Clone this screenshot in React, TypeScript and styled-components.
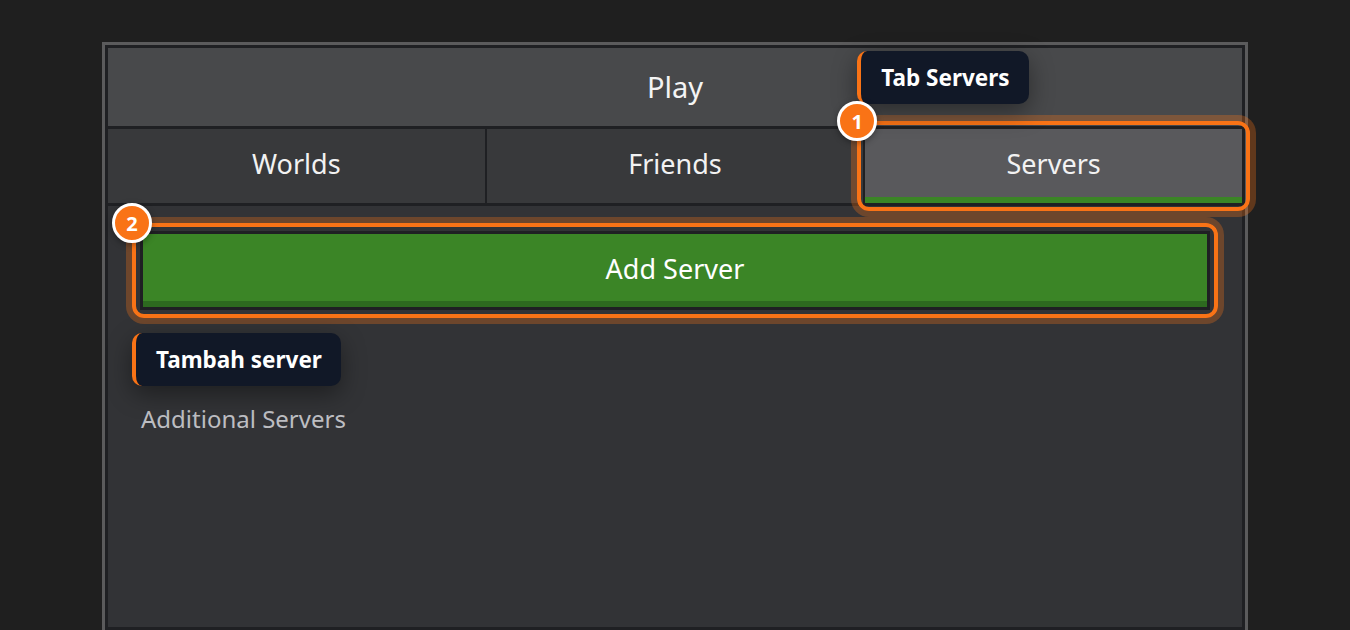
import React from 'react';
import styled, { createGlobalStyle } from 'styled-components';

const GlobalStyle = createGlobalStyle`
  html, body {
    margin: 0;
    padding: 0;
    background: #1f1f1f;
    font-family: "Noto Sans", "Open Sans", sans-serif;
    overflow: hidden;
  }
`;

const Frame = styled.div`
  width: 1146px;
  box-sizing: border-box;
  margin: 42px auto 0;
  border: 3px solid #5b5b5c;
  background: #1f2023;
  padding: 3px;
`;

const Panel = styled.div`
  display: flex;
  flex-direction: column;
  gap: 3px;
`;

const Header = styled.div`
  height: 78px;
  background: #48494b;
  color: #f4f4f4;
  font-size: 29px;
  display: flex;
  align-items: center;
  justify-content: center;
  padding-bottom: 2px;
  box-sizing: border-box;
`;

const TabRow = styled.div`
  display: grid;
  grid-template-columns: repeat(3, 1fr);
  gap: 2px;
  height: 74px;
`;

const Tab = styled.div<{ active?: boolean }>`
  height: 100%;
  box-sizing: border-box;
  background: ${({ active }) => (active ? '#59595c' : '#38393b')};
  box-shadow: ${({ active }) => (active ? 'inset 0 -6px 0 #3b8526' : 'none')};
  color: #f2f2f2;
  font-size: 27px;
  display: flex;
  align-items: center;
  justify-content: center;
  padding-bottom: 5px;
`;

const Content = styled.div`
  background: #323336;
  height: 421px;
  box-sizing: border-box;
  padding: 25px 32px;
`;

const Highlight = styled.div<{ fill?: boolean }>`
  position: relative;
  height: ${({ fill }) => (fill ? '100%' : 'auto')};
`;

const Ring = styled.div`
  position: absolute;
  inset: -8px;
  border: 4px solid #f97316;
  border-radius: 12px;
  box-shadow: 0 0 0 6px rgba(249, 115, 22, 0.3);
  pointer-events: none;
  z-index: 2;
`;

const Badge = styled.div`
  position: absolute;
  left: -28px;
  top: -28px;
  width: 40px;
  height: 40px;
  box-sizing: border-box;
  border-radius: 50%;
  border: 3px solid #ffffff;
  background: #f97316;
  color: #fff;
  font-weight: 700;
  font-size: 20px;
  display: flex;
  align-items: center;
  justify-content: center;
  box-shadow: 0 2px 6px rgba(0, 0, 0, 0.35);
  z-index: 4;
`;

const Tip = styled.div<{ below?: boolean }>`
  position: absolute;
  left: -8px;
  ${({ below }) => (below ? 'top: calc(100% + 23px);' : 'bottom: calc(100% + 25px);')}
  background: #111827;
  border-left: 4px solid #f97316;
  border-radius: 10px;
  padding: 11px 19px 11px 20px;
  color: #fff;
  font-weight: 700;
  font-size: 22.5px;
  line-height: 31px;
  white-space: nowrap;
  box-shadow: 0 8px 24px rgba(0, 0, 0, 0.4);
  z-index: 3;
`;

const AddButton = styled.div`
  height: 79px;
  box-sizing: border-box;
  border: 3px solid #1f2023;
  background: #3b8526;
  box-shadow: inset 0 -6px 0 #2d6a1f;
  color: #fff;
  font-size: 27px;
  display: flex;
  align-items: center;
  justify-content: center;
  padding-bottom: 4px;
`;

const SectionLabel = styled.div`
  margin-top: 92px;
  margin-left: 1px;
  color: #bdbec2;
  font-size: 24px;
  line-height: 33px;
`;

export default function App() {
  return (
    <>
      <GlobalStyle />
      <Frame>
        <Panel>
          <Header>Play</Header>
          <TabRow>
            <Tab>Worlds</Tab>
            <Tab>Friends</Tab>
            <Highlight fill>
              <Tab active>Servers</Tab>
              <Ring />
              <Badge>1</Badge>
              <Tip>Tab Servers</Tip>
            </Highlight>
          </TabRow>
          <Content>
            <Highlight>
              <AddButton>Add Server</AddButton>
              <Ring />
              <Badge>2</Badge>
              <Tip below>Tambah server</Tip>
            </Highlight>
            <SectionLabel>Additional Servers</SectionLabel>
          </Content>
        </Panel>
      </Frame>
    </>
  );
}
